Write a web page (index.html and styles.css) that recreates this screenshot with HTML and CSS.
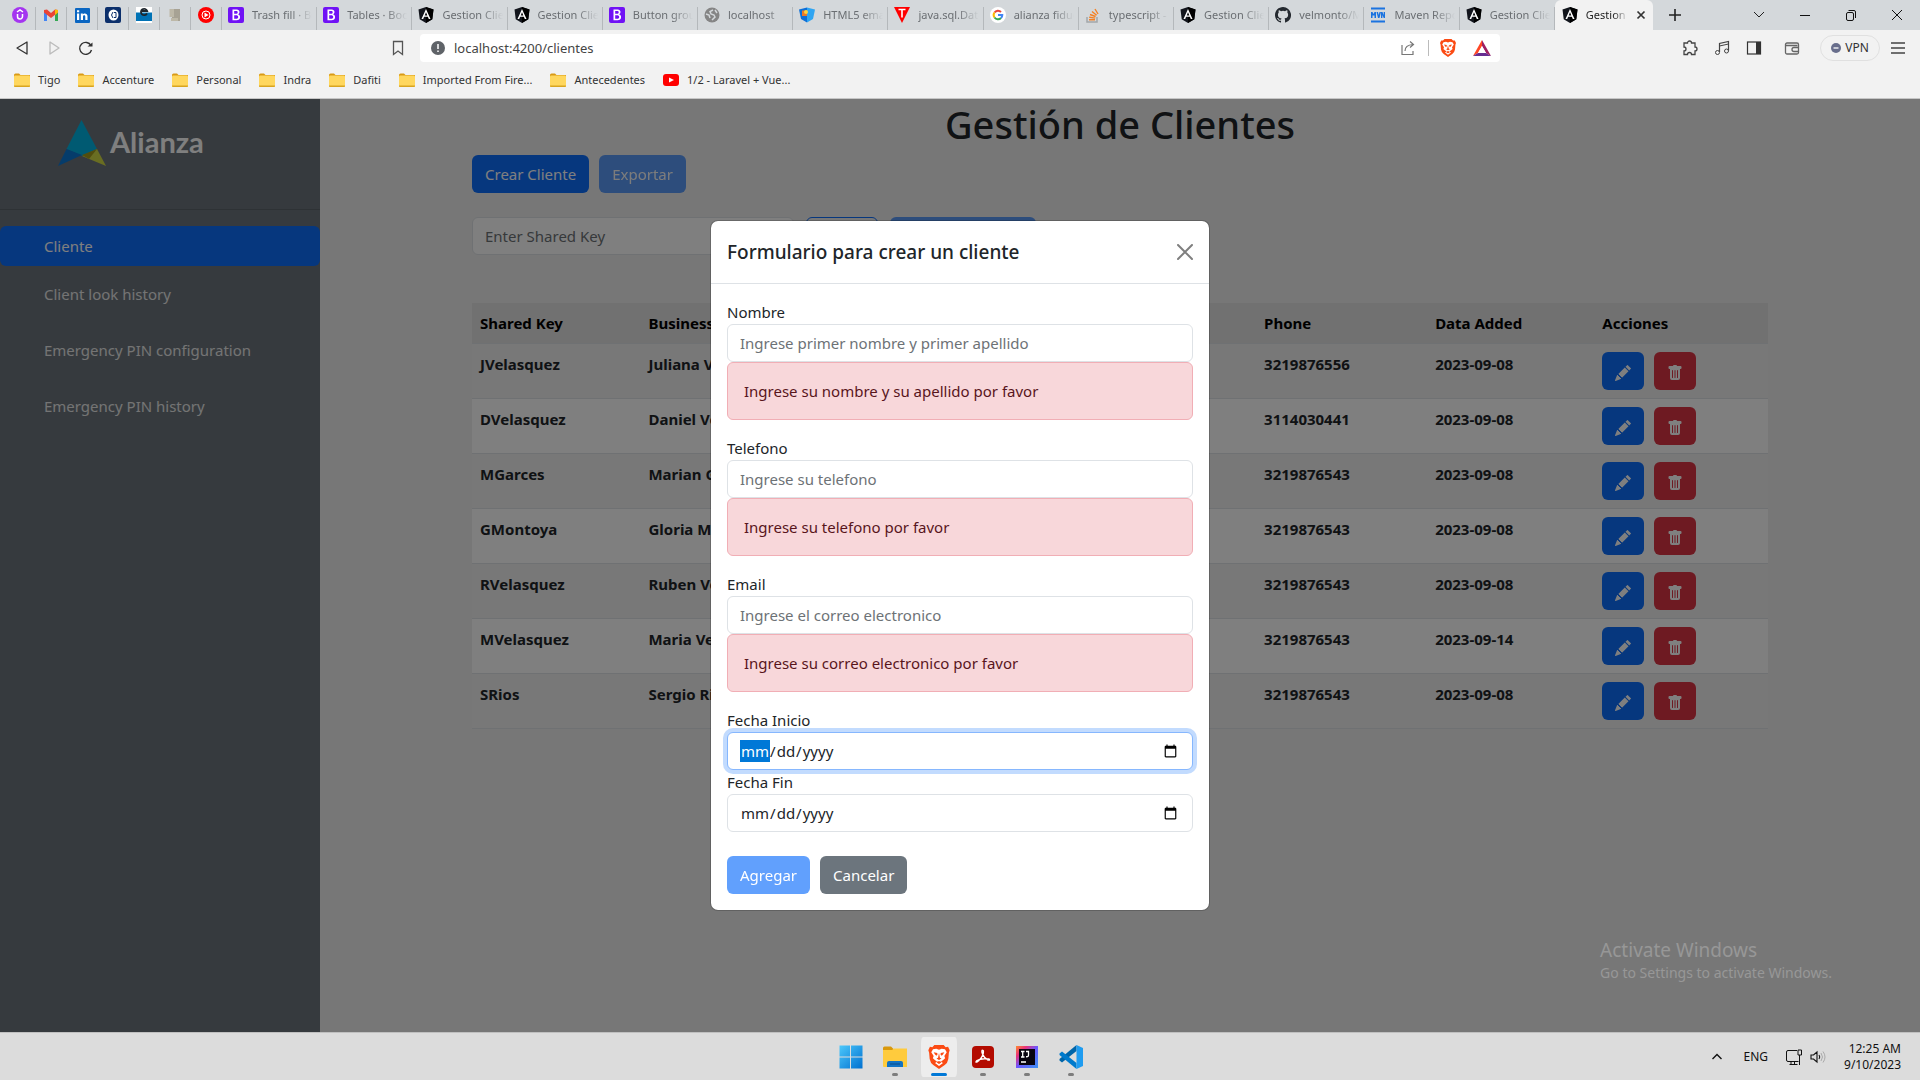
FILE: index.html
```html
<!DOCTYPE html>
<html lang="en-US">
<head>
<meta charset="utf-8">
<meta name="viewport" content="width=device-width, initial-scale=1">
<title>Gestion Clientes</title>
<link rel="stylesheet" href="styles.css">
</head>
<body>
<svg class="sprite" aria-hidden="true">
  <symbol id="i-bootstrap" viewBox="0 0 16 16"><rect width="16" height="16" rx="2" fill="#7012f5"/><path d="M4.500 2.500h4.200c1.700 0 2.800.9 2.800 2.500 0 1.100-.7 2-1.700 2.300 1.400.2 2.300 1.300 2.300 2.700 0 2.100-1.400 3.300-3.600 3.300H4.500zM6.200 4v2.800h1.700c1.100 0 1.800-.5 1.800-1.500 0-.9-.6-1.300-1.600-1.300zm0 4.200v3.600h2c1.300 0 2-.6 2-1.800 0-1.200-.8-1.800-2.200-1.800z" fill="#fff"/></symbol>
  <symbol id="i-angular" viewBox="0 0 16 16"><path d="M8 0l7.500 2.600-1.200 9.600L8 16l-6.300-3.800L.5 2.600z" fill="#12151c"/><path d="M8 0l7.500 2.600-1.200 9.600L8 16z" fill="#000"/><path d="M8 2L3.500 12h1.700l.9-2.200h3.800l.9 2.200h1.700zm0 3.200l1.300 3.200H6.700z" fill="#fff"/></symbol>
  <symbol id="i-folder" viewBox="0 0 16 16"><path d="M0 3Q0 1.500 1.500 1.500H5L6.500 3H16v4H0z" fill="#d99a16"/><rect y="3.500" width="16" height="11.500" rx="1" fill="#ffd75e"/><path d="M0 13.500h16v.5q0 1-1 1H1q-1 0-1-1z" fill="#d9a520"/></symbol>
  <symbol id="i-brave" viewBox="0 0 16 18"><path d="M11.500 0l1.500 1.600 1.800-.2L16 4l-.6 1.800-.4 4.700q-.5 3-2.700 4.500L8 18l-4.300-3Q1.500 13.500 1 10.500L.6 5.800 0 4l1.200-2.600 1.800.2L4.500 0z" fill="#fb4b14"/><path d="M8 3.500l2-.7 2.500.4 1.300 2.200-1.800 2.800.6 1.800-1.500 1.300L9.400 12.500 11 13.500 8 15.800 5 13.500l1.600-1L4.900 11.300 3.400 10l.6-1.800-1.800-2.800 1.300-2.200L6 2.800z" fill="#fff"/><path d="M4 5.500l2.700.5.200 1.200-.9.800-1-.8zm8 0L9.300 6l-.2 1.200.9.800 1-.8zM8 6l.7 3.500 1.200.7L8 11.300l-1.900-1.100 1.200-.7zM7 12.200h2l.7 1L8 14.200l-1.700-1z" fill="#fb4b14"/></symbol>
  <symbol id="i-pencil" viewBox="0 0 16 16"><path fill="currentColor" d="M12.854.146a.5.5 0 0 0-.707 0L10.500 1.793 14.207 5.500l1.647-1.646a.5.5 0 0 0 0-.708zm.646 6.061L9.793 2.500 3.293 9H3.500a.5.5 0 0 1 .5.5v.5h.5a.5.5 0 0 1 .5.5v.5h.5a.5.5 0 0 1 .5.5v.5h.5a.5.5 0 0 1 .5.500v.207zm-7.468 7.468A.5.5 0 0 1 6 13.500V13h-.5a.5.5 0 0 1-.5-.5V12h-.5a.5.5 0 0 1-.5-.5V11h-.5a.5.5 0 0 1-.5-.5V10h-.5a.499.499 0 0 1-.175-.032l-.179.178a.5.5 0 0 0-.110.168l-2 5a.5.5 0 0 0 .650.650l5-2a.5.5 0 0 0 .168-.110z"/></symbol>
  <symbol id="i-trash" viewBox="0 0 16 16"><path fill="currentColor" d="M2.500 1a1 1 0 0 0-1 1v1a1 1 0 0 0 1 1H3v9a2 2 0 0 0 2 2h6a2 2 0 0 0 2-2V4h.5a1 1 0 0 0 1-1V2a1 1 0 0 0-1-1H10a1 1 0 0 0-1-1H7a1 1 0 0 0-1 1zm3 4a.5.5 0 0 1 .5.5v7a.5.5 0 0 1-1 0v-7a.5.5 0 0 1 .5-.5M8 5a.5.5 0 0 1 .5.5v7a.5.5 0 0 1-1 0v-7A.5.5 0 0 1 8 5m3 .5v7a.5.5 0 0 1-1 0v-7a.5.5 0 0 1 1 0"/></symbol>
</svg>

<header class="chrome">
  <div class="tabstrip">
    <nav class="tabs" aria-label="Tabs">
      <a class="tab tab--pinned" href="#" aria-label="Pinned"><svg class="ico" viewBox="0 0 16 16"><circle cx="8" cy="8" r="8" fill="#a435f0"/><path d="M5.500 7v2.500a2.500 2.500 0 0 0 5 0V7M5 5l3-2 3 2" fill="none" stroke="#fff" stroke-width="1.500"/></svg></a>
      <a class="tab tab--pinned" href="#" aria-label="Gmail"><svg class="ico" viewBox="0 0 16 16"><path d="M1 4v10h3V7z" fill="#4285f4"/><path d="M15 4v10h-3V7z" fill="#34a853"/><path d="M1 3l3-.5 4 3.500 4-3.500 3 .5v2.500L8 11 1 5.500z" fill="#ea4335"/><path d="M12 2.500l3 .5v2.500L12 8z" fill="#fbbc04"/></svg></a>
      <a class="tab tab--pinned" href="#" aria-label="LinkedIn"><svg class="ico" viewBox="0 0 16 16"><rect x="1" y="1" width="15" height="15" rx="1" fill="#0a66c2"/><path d="M3 6.500h2.200V13H3zM3 3.200h2.200v2H3zM6.800 6.500h2v.9c1-1.600 4.700-1.500 4.700 1.700V13h-2.200V9.700c0-2-2.300-1.800-2.300 0V13H6.800z" fill="#fff"/></svg></a>
      <a class="tab tab--pinned" href="#" aria-label="Bank"><svg class="ico" viewBox="0 0 16 16"><rect width="16" height="16" rx="2" fill="#0b2f6b"/><ellipse cx="8.500" cy="8" rx="5" ry="5.500" fill="#fff"/><path d="M8 5Q5 8 8 11M9 5.500h2v5H9" fill="none" stroke="#0b2f6b"/></svg></a>
      <a class="tab tab--pinned" href="#" aria-label="Shop"><svg class="ico" viewBox="0 0 16 16"><path d="M0 0h16v16H0z" fill="#fff"/><path d="M0 5.500h16V14H0z" fill="#0072b5"/><path d="M11 6.500a3.200 3.200 0 1 1 .2-2.500H6" fill="none" stroke="#1d252c" stroke-width="1.800"/></svg></a>
      <a class="tab tab--pinned" href="#" aria-label="Docs"><svg class="ico" viewBox="0 0 16 16"><path d="M5 2h8v12H5z" fill="#a7a294"/><path d="M2.500 2H7v8H2.500zM4 11h7v3H4z" fill="#bdb8a8"/></svg></a>
      <a class="tab tab--pinned" href="#" aria-label="Music"><svg class="ico" viewBox="0 0 16 16"><circle cx="8" cy="8" r="8" fill="#f00"/><circle cx="8" cy="8" r="4" fill="none" stroke="#fff"/><path d="M6.500 5.500L10.500 8l-4 2.500z" fill="#fff"/></svg></a>
      <a class="tab" href="#"><svg class="ico"><use href="#i-bootstrap"/></svg><span class="tab__title">Trash fill · Bootstrap</span></a>
      <a class="tab" href="#"><svg class="ico"><use href="#i-bootstrap"/></svg><span class="tab__title">Tables · Bootstrap</span></a>
      <a class="tab" href="#"><svg class="ico"><use href="#i-angular"/></svg><span class="tab__title">Gestion Clientes</span></a>
      <a class="tab" href="#"><svg class="ico"><use href="#i-angular"/></svg><span class="tab__title">Gestion Clientes</span></a>
      <a class="tab" href="#"><svg class="ico"><use href="#i-bootstrap"/></svg><span class="tab__title">Button group</span></a>
      <a class="tab" href="#"><svg class="ico" viewBox="0 0 16 16"><circle cx="8" cy="8" r="7.500" fill="#858585"/><path d="M9 3L6 4.500 7 7l3 1 1 2-3 3M2 7l3 1 1 3M11 3l2 3" fill="none" stroke="#d4d8db" stroke-width="1.500"/></svg><span class="tab__title">localhost</span></a>
      <a class="tab" href="#"><svg class="ico" viewBox="0 0 16 16"><path d="M0 2.500L8 .500v15L2 12z" fill="#0d6fd8"/><path d="M8 .500l8 2L14 12l-6 3.500z" fill="#2fa5f2"/><path d="M3 3.500h5V9H3z" fill="#e9792b"/><circle cx="7" cy="5" r="2" fill="#ffd43b"/></svg><span class="tab__title">HTML5 email</span></a>
      <a class="tab" href="#"><svg class="ico" viewBox="0 0 16 16"><path d="M0 0h16L8 16z" fill="#f00"/><path d="M4.500 2.500h7M8 2.500v8" stroke="#fff" stroke-width="1.600"/></svg><span class="tab__title">java.sql.Date</span></a>
      <a class="tab" href="#"><svg class="ico" viewBox="0 0 16 16"><circle cx="8" cy="8" r="8" fill="#fff"/><g fill="none" stroke-width="2"><path d="M4.500 5.500A4.300 4.300 0 0 1 11 5" stroke="#ea4335"/><path d="M4.500 5.500a4.300 4.300 0 0 0 0 5" stroke="#fbbc04"/><path d="M4.500 10.500A4.300 4.300 0 0 0 11 11" stroke="#34a853"/><path d="M11 11a4 4 0 0 0 1.300-3H8" stroke="#4285f4"/></g></svg><span class="tab__title">alianza fiduciaria</span></a>
      <a class="tab" href="#"><svg class="ico" viewBox="0 0 16 16"><path d="M2 10v5h10v-5" fill="none" stroke="#a3a7aa" stroke-width="1.500"/><path d="M4 12.800h6M4.200 10.300l6 .8M5 7.500l5.600 2M7 4.500l4.600 3.800M10 2l3 5" stroke="#f48024" stroke-width="1.400"/></svg><span class="tab__title">typescript - How</span></a>
      <a class="tab" href="#"><svg class="ico"><use href="#i-angular"/></svg><span class="tab__title">Gestion Clientes</span></a>
      <a class="tab" href="#"><svg class="ico" viewBox="0 0 16 16"><path fill="#24292f" d="M8 0C3.580 0 0 3.580 0 8c0 3.540 2.290 6.530 5.470 7.590.4.070.55-.17.55-.38v-1.490c-2.010.37-2.530-.49-2.690-.94-.09-.23-.48-.94-.82-1.130-.28-.15-.68-.52-.01-.53.63-.01 1.080.58 1.230.82.72 1.210 1.870.87 2.330.66.07-.52.28-.87.51-1.070-1.780-.2-3.640-.89-3.640-3.950 0-.87.31-1.590.82-2.150-.08-.2-.36-1.020.08-2.120 0 0 .67-.21 2.200.82a7.600 7.600 0 0 1 4 0c1.530-1.040 2.200-.82 2.200-.82.44 1.100.16 1.920.08 2.120.51.56.82 1.270.82 2.150 0 3.070-1.870 3.750-3.650 3.950.29.25.54.73.54 1.480v2.200c0 .21.15.46.55.38A8 8 0 0 0 8 0"/></svg><span class="tab__title">velmonto/Mon</span></a>
      <a class="tab" href="#"><svg class="ico" viewBox="0 0 16 16"><path d="M1 .500h14v2H1zM1 13.500h14v2H1zM1 5h1.500L3.500 7l1-2H6v6H4.500V8.500h-2V11H1zM6.500 5H8l.7 3L9.500 5H11l-1.500 6H8zM11 5h1.500L13.700 8V5H15v6h-1.300l-1.300-3v3H11z" fill="#1a73e0"/></svg><span class="tab__title">Maven Repository</span></a>
      <a class="tab" href="#"><svg class="ico"><use href="#i-angular"/></svg><span class="tab__title">Gestion Clientes</span></a>
      <a class="tab tab--active" href="#" aria-current="page"><svg class="ico"><use href="#i-angular"/></svg><span class="tab__title">Gestion Clientes</span><svg class="ico-s" viewBox="0 0 10 10"><path d="M1.500 1.500l7 7m0-7l-7 7" stroke="#333" stroke-width="1.700"/></svg></a>
    </nav>
    <div class="window-controls">
      <button class="wc wc--new" aria-label="New tab"><svg class="ico" viewBox="0 0 16 16"><path d="M8 2v12M2 8h12" stroke="#222" stroke-width="1.600"/></svg></button>
      <button class="wc" aria-label="Search tabs"><svg class="ico" viewBox="0 0 16 16"><path d="M3 5l5 5 5-5" fill="none" stroke="#222"/></svg></button>
      <button class="wc" aria-label="Minimize"><svg class="ico" viewBox="0 0 16 16"><path d="M3 8.500h10" stroke="#111"/></svg></button>
      <button class="wc" aria-label="Restore"><svg class="ico" viewBox="0 0 16 16"><rect x="3.500" y="5.500" width="7" height="8" rx="1.500" fill="none" stroke="#111"/><path d="M5.500 3.500H11q1.500 0 1.500 1.500v6" fill="none" stroke="#111"/></svg></button>
      <button class="wc" aria-label="Close"><svg class="ico" viewBox="0 0 16 16"><path d="M3 3l10 10M13 3L3 13" stroke="#111"/></svg></button>
    </div>
  </div>

  <div class="toolbar">
    <div class="toolbar__nav">
      <button class="tool" aria-label="Back"><svg class="ico" viewBox="0 0 16 16"><path d="M13 2v12L3 8z" fill="none" stroke="#333" stroke-width="1.300" stroke-linejoin="round"/></svg></button>
      <button class="tool" aria-label="Forward"><svg class="ico" viewBox="0 0 16 16"><path d="M4 2v12l9-6z" fill="none" stroke="#bbb" stroke-width="1.300" stroke-linejoin="round"/></svg></button>
      <button class="tool" aria-label="Reload"><svg class="ico" viewBox="0 0 16 16"><path d="M13 5.500A6 6 0 1 0 13.500 10" fill="none" stroke="#333" stroke-width="1.400"/><path d="M9.500 6.500h5v-4z" fill="#333"/></svg></button>
    </div>
    <button class="tool tool--mark" aria-label="Bookmark"><svg class="ico" viewBox="0 0 16 16"><path d="M3.500 1.500h9v13L8 11l-4.500 3.500z" fill="none" stroke="#555" stroke-width="1.300"/></svg></button>
    <div class="address">
      <svg class="ico-m" viewBox="0 0 14 14"><circle cx="7" cy="7" r="7" fill="#5f6368"/><path d="M7 3v5M7 9.500v1.500" stroke="#fff" stroke-width="1.500"/></svg>
      <input class="address__input" aria-label="Address" value="localhost:4200/clientes">
      <svg class="ico" viewBox="0 0 16 16"><path d="M2 5v9.500h11V11M5 11q0-6 8-6.500M10 1.500l3.500 3L10 7.500" fill="none" stroke="#777" stroke-width="1.200"/></svg>
      <span class="address__sep"></span>
      <svg class="ico-l" viewBox="0 0 16 18"><use href="#i-brave"/></svg>
      <svg class="ico-l" viewBox="0 0 18 16"><path d="M9 0L0 16l5-3 4-7z" fill="#ff4724"/><path d="M0 16h18l-5-3H5z" fill="#662d91"/><path d="M9 0l9 16-5-3-4-7z" fill="#9e1f63"/><path d="M9 6l4 7H5z" fill="#fff"/></svg>
    </div>
    <div class="toolbar__ext">
      <button class="tool" aria-label="Extensions"><svg class="ico" viewBox="0 0 16 16"><path d="M2 3h3.500a2 2 0 0 1 4 0H13v4a2 2 0 0 1 0 4v3.500H9.500a2 2 0 0 0-4 0H2V11a2 2 0 0 0 0-4z" fill="none" stroke="#444" stroke-width="1.300"/></svg></button>
      <button class="tool" aria-label="Playlist"><svg class="ico" viewBox="0 0 16 16"><path d="M5.500 12V3.500l9-2v9" fill="none" stroke="#444" stroke-width="1.200"/><path d="M5.500 6l9-2" stroke="#444"/><circle cx="3.500" cy="12.500" r="2" fill="none" stroke="#444"/><circle cx="12.500" cy="11" r="2" fill="none" stroke="#444"/></svg></button>
      <button class="tool" aria-label="Side panel"><svg class="ico" viewBox="0 0 16 16"><rect x="1.500" y="2" width="13" height="12" fill="none" stroke="#333" stroke-width="1.200"/><path d="M10 2h4.500v12H10z" fill="#333"/></svg></button>
      <button class="tool" aria-label="Wallet"><svg class="ico" viewBox="0 0 16 16"><rect x="1.500" y="3" width="13" height="11" rx="1.500" fill="none" stroke="#666" stroke-width="1.300"/><path d="M1.500 5.500h12M14.500 7.500H10a2 2 0 0 0 0 4h4.500" fill="none" stroke="#666" stroke-width="1.300"/></svg></button>
      <button class="vpn"><svg class="ico-s" viewBox="0 0 10 10"><circle cx="5" cy="5" r="5" fill="#686e8c"/><path d="M2.500 5h5" stroke="#fff" stroke-width="1.300"/></svg>VPN</button>
      <button class="tool" aria-label="Menu"><svg class="ico" viewBox="0 0 16 16"><path d="M1 3h14M1 8h14M1 13h14" stroke="#444" stroke-width="1.300"/></svg></button>
    </div>
  </div>

  <nav class="bookmarks" aria-label="Bookmarks">
    <a class="bookmark" href="#"><svg class="ico"><use href="#i-folder"/></svg>Tigo</a>
    <a class="bookmark" href="#"><svg class="ico"><use href="#i-folder"/></svg>Accenture</a>
    <a class="bookmark" href="#"><svg class="ico"><use href="#i-folder"/></svg>Personal</a>
    <a class="bookmark" href="#"><svg class="ico"><use href="#i-folder"/></svg>Indra</a>
    <a class="bookmark" href="#"><svg class="ico"><use href="#i-folder"/></svg>Dafiti</a>
    <a class="bookmark" href="#"><svg class="ico"><use href="#i-folder"/></svg>Imported From Fire...</a>
    <a class="bookmark" href="#"><svg class="ico"><use href="#i-folder"/></svg>Antecedentes</a>
    <a class="bookmark" href="#"><svg class="ico" viewBox="0 0 16 16"><rect y="2" width="16" height="12" rx="3" fill="#f00"/><path d="M6 5.500L11 8l-5 2.500z" fill="#fff"/></svg>1/2 - Laravel + Vue...</a>
  </nav>
</header>

<div class="page">
  <aside class="sidebar">
    <div class="brand">
      <svg class="brand__mark" viewBox="0 0 48 46"><path d="M23.500 0L39 29 24 36 8.500 29z" fill="#00b4e4"/><path d="M8.500 29L0 46l24-11z" fill="#0a78d6"/><path d="M39 29l9 17-24-10z" fill="#d3da45"/><path d="M39 29l-8 10-7-4z" fill="#a39a1c"/></svg>
      <span class="brand__name">Alianza</span>
    </div>
    <nav class="menu" aria-label="Menu">
      <a class="menu__item menu__item--active" href="#">Cliente</a>
      <a class="menu__item" href="#">Client look history</a>
      <a class="menu__item" href="#">Emergency PIN configuration</a>
      <a class="menu__item" href="#">Emergency PIN history</a>
    </nav>
  </aside>

  <main class="content">
    <h1 class="title">Gestión de Clientes</h1>
    <div class="container">
      <div class="actions">
        <button class="btn btn--primary">Crear Cliente</button>
        <button class="btn btn--primary" disabled>Exportar</button>
      </div>
      <form class="search">
        <input class="control search__input" aria-label="Shared Key" placeholder="Enter Shared Key">
        <button class="btn btn--outline" type="button">Buscar</button>
        <button class="btn btn--primary" type="button" disabled>Limpiar búsqueda</button>
      </form>
      <table class="clients">
        <colgroup><col class="c-key"><col class="c-name"><col class="c-mail"><col class="c-phone"><col class="c-date"><col class="c-act"></colgroup>
        <thead><tr><th>Shared Key</th><th>Business ID</th><th>Email</th><th>Phone</th><th>Data Added</th><th>Acciones</th></tr></thead>
        <tbody>
          <tr><th>JVelasquez</th><th>Juliana Velasquez</th><td></td><th>3219876556</th><th>2023-09-08</th><td><div class="row-actions"><button class="btn btn--primary" aria-label="Editar"><svg class="ico"><use href="#i-pencil"/></svg></button><button class="btn btn--danger" aria-label="Borrar"><svg class="ico"><use href="#i-trash"/></svg></button></div></td></tr>
          <tr><th>DVelasquez</th><th>Daniel Velasquez</th><td></td><th>3114030441</th><th>2023-09-08</th><td><div class="row-actions"><button class="btn btn--primary" aria-label="Editar"><svg class="ico"><use href="#i-pencil"/></svg></button><button class="btn btn--danger" aria-label="Borrar"><svg class="ico"><use href="#i-trash"/></svg></button></div></td></tr>
          <tr><th>MGarces</th><th>Marian Garces</th><td></td><th>3219876543</th><th>2023-09-08</th><td><div class="row-actions"><button class="btn btn--primary" aria-label="Editar"><svg class="ico"><use href="#i-pencil"/></svg></button><button class="btn btn--danger" aria-label="Borrar"><svg class="ico"><use href="#i-trash"/></svg></button></div></td></tr>
          <tr><th>GMontoya</th><th>Gloria Montoya</th><td></td><th>3219876543</th><th>2023-09-08</th><td><div class="row-actions"><button class="btn btn--primary" aria-label="Editar"><svg class="ico"><use href="#i-pencil"/></svg></button><button class="btn btn--danger" aria-label="Borrar"><svg class="ico"><use href="#i-trash"/></svg></button></div></td></tr>
          <tr><th>RVelasquez</th><th>Ruben Velasquez</th><td></td><th>3219876543</th><th>2023-09-08</th><td><div class="row-actions"><button class="btn btn--primary" aria-label="Editar"><svg class="ico"><use href="#i-pencil"/></svg></button><button class="btn btn--danger" aria-label="Borrar"><svg class="ico"><use href="#i-trash"/></svg></button></div></td></tr>
          <tr><th>MVelasquez</th><th>Maria Velasquez</th><td></td><th>3219876543</th><th>2023-09-14</th><td><div class="row-actions"><button class="btn btn--primary" aria-label="Editar"><svg class="ico"><use href="#i-pencil"/></svg></button><button class="btn btn--danger" aria-label="Borrar"><svg class="ico"><use href="#i-trash"/></svg></button></div></td></tr>
          <tr><th>SRios</th><th>Sergio Rios</th><td></td><th>3219876543</th><th>2023-09-08</th><td><div class="row-actions"><button class="btn btn--primary" aria-label="Editar"><svg class="ico"><use href="#i-pencil"/></svg></button><button class="btn btn--danger" aria-label="Borrar"><svg class="ico"><use href="#i-trash"/></svg></button></div></td></tr>
        </tbody>
      </table>
    </div>
  </main>

  <div class="backdrop">
    <div class="modal" role="dialog" aria-modal="true" aria-labelledby="modal-title">
      <div class="modal__header">
        <h2 class="modal__title" id="modal-title">Formulario para crear un cliente</h2>
        <button class="modal__close" aria-label="Close"><svg class="ico" viewBox="0 0 16 16"><path d="M1 1l14 14M15 1L1 15" stroke="currentColor" stroke-width="2" stroke-linecap="round"/></svg></button>
      </div>
      <form class="modal__body">
        <div class="field"><label for="nombre">Nombre</label><input class="control" id="nombre" type="text" placeholder="Ingrese primer nombre y primer apellido"><div class="alert" role="alert">Ingrese su nombre y su apellido por favor</div></div>
        <div class="field"><label for="telefono">Telefono</label><input class="control" id="telefono" type="text" placeholder="Ingrese su telefono"><div class="alert" role="alert">Ingrese su telefono por favor</div></div>
        <div class="field"><label for="email">Email</label><input class="control" id="email" type="text" placeholder="Ingrese el correo electronico"><div class="alert" role="alert">Ingrese su correo electronico por favor</div></div>
        <div class="field field--date"><label for="inicio">Fecha Inicio</label><input class="control control--focus" id="inicio" type="date"></div>
        <div class="field field--date"><label for="fin">Fecha Fin</label><input class="control" id="fin" type="date"></div>
        <div class="modal__actions">
          <button class="btn btn--primary" type="submit" disabled>Agregar</button>
          <button class="btn btn--secondary" type="button">Cancelar</button>
        </div>
      </form>
    </div>
  </div>

  <div class="watermark">
    <p class="watermark__title">Activate Windows</p>
    <p class="watermark__text">Go to Settings to activate Windows.</p>
  </div>
</div>

<footer class="taskbar">
  <div class="taskbar__apps">
    <button class="app" aria-label="Start"><svg class="app__icon" viewBox="0 0 24 24"><defs><linearGradient id="win" x2="1" y2="1"><stop stop-color="#4cc8fb"/><stop offset="1" stop-color="#0070d0"/></linearGradient></defs><path d="M.500.500H11v11H.500zM12 .500h11.500v11H12zM.500 12.500H11v11H.500zM12 12.500h11.500v11H12z" fill="url(#win)"/></svg></button>
    <button class="app app--open" aria-label="File Explorer"><svg class="app__icon" viewBox="0 0 24 24"><path d="M0 3q0-1.500 1.500-1.500H8L10.500 4v4H0z" fill="#d9980c"/><path d="M0 5h9l2-1.500h13V22H1q-1 0-1-1z" fill="#ffcb3d"/><path d="M4 22v-4q0-2 2-2h12q2 0 2 2v4z" fill="#1173c4"/><path d="M7 19h10" stroke="#0c579b" stroke-width="1.500"/></svg></button>
    <button class="app app--open app--current" aria-label="Brave"><svg class="app__icon"><use href="#i-brave"/></svg></button>
    <button class="app app--open" aria-label="Acrobat"><svg class="app__icon" viewBox="0 0 24 24"><rect x="1" y="1" width="22" height="22" rx="4" fill="#b30b00"/><path d="M11 5.500q2-1 1.200 3Q11 13.500 6 17q-2 .5 0-1.500 4-2.500 12-1.500 1.500 1.500-1 1-4-2-5.500-6-1-2.500-.5-3.500z" fill="none" stroke="#fff" stroke-width="1.400"/></svg></button>
    <button class="app app--open" aria-label="IntelliJ IDEA"><svg class="app__icon" viewBox="0 0 24 24"><defs><linearGradient id="ij" x2="1" y2="1"><stop stop-color="#fe8c2d"/><stop offset=".25" stop-color="#e8317b"/><stop offset=".5" stop-color="#6b57ff"/><stop offset="1" stop-color="#3d93f5"/></linearGradient></defs><path d="M1 1h22v22H1z" fill="url(#ij)"/><path d="M4 4h16v16H4z" fill="#080410"/><path d="M6 6.500h3.500M7.700 6.500V12M6 12h3.500M11 6.500h2.500V10q0 2-2.500 1.700M6 17h5" fill="none" stroke="#fff" stroke-width="1.300"/></svg></button>
    <button class="app app--open" aria-label="Visual Studio Code"><svg class="app__icon" viewBox="0 0 24 24"><path d="M17.500 0v6L3 17.500.500 15.500v-1.500z" fill="#0065a9"/><path d="M17.500 24v-6L3 6.500.500 8.500V10z" fill="#007acc"/><path d="M17.500 0L24 3v18l-6.500 3z" fill="#1f9cf0"/></svg></button>
  </div>
  <div class="tray">
    <button class="tray__btn" aria-label="Hidden icons"><svg class="ico" viewBox="0 0 16 16"><path d="M3.500 10L8 5.500l4.500 4.500" fill="none" stroke="#111" stroke-width="1.400"/></svg></button>
    <button class="tray__btn">ENG</button>
    <button class="tray__btn tray__btn--status" aria-label="Network and volume"><svg class="ico" viewBox="0 0 16 16"><path d="M11 1.500H2Q.500 1.500.500 3v8Q.500 12.500 2 12.500h10.500M5 12.500v3M3.500 15.500h8M8.500 12.500v3M12 1h3.500v5H12zM13.500 6v10" fill="none" stroke="#111"/></svg><svg class="ico" viewBox="0 0 16 16"><path d="M1 6v4h2.500L7 13V3L3.500 6zM9 6q1.500 2 0 4" fill="none" stroke="#111" stroke-width="1.100"/><path d="M11 4q3 4 0 8M13 2.500q4 5.500 0 11" fill="none" stroke="#aaa"/></svg></button>
    <div class="clock"><time>12:25 AM</time><time>9/10/2023</time></div>
  </div>
</footer>
</body>
</html>
```
FILE: styles.css
```css
*, *::before, *::after { box-sizing: border-box; }

body {
  margin: 0;
  min-height: 100vh;
  display: flex;
  flex-direction: column;
  font-family: "Noto Sans", "Open Sans", sans-serif;
  font-size: 15px;
  line-height: 24px;
  color: #212529;
}

button, input { font: inherit; color: inherit; }
button { border: 0; padding: 0; background: none; }
a { color: inherit; text-decoration: none; }
svg { display: block; flex: none; }

.sprite { position: absolute; width: 0; height: 0; }
.ico { width: 16px; height: 16px; }
.ico-s { width: 10px; height: 10px; }
.ico-m { width: 14px; height: 14px; }
.ico-l { width: 18px; height: 18px; }

/* Browser window */
.chrome {
  background: #f2f2f2;
  border-bottom: 1px solid #c6c6c6;
  font-size: 11px;
  line-height: 16px;
}

.tabstrip { display: flex; height: 30px; background: #d4d8db; }
.tabs { display: flex; flex: 1; min-width: 0; padding-left: 5px; }
.tab {
  display: flex;
  flex: 1 1 0;
  min-width: 0;
  align-items: center;
  gap: 8px;
  padding: 0 5px 0 6px;
  color: #6a6e72;
  background: linear-gradient(#b4b8bb, #b4b8bb) right bottom / 1px 23px no-repeat;
}
.tab--pinned { flex: 0 0 31px; padding: 0 8px 0 7px; }
.tab--active { background: #f2f2f2; border-radius: 6px 6px 0 0; color: #222; padding: 0 7px; }
.tab__title {
  flex: 1;
  overflow: hidden;
  white-space: nowrap;
  -webkit-mask-image: linear-gradient(90deg, #000 65%, transparent);
  mask-image: linear-gradient(90deg, #000 65%, transparent);
}
.window-controls { display: flex; width: 267px; align-items: center; }
.wc { display: flex; width: 46px; height: 28px; align-items: center; justify-content: center; }
.wc--new { width: 44px; margin-right: auto; }

.toolbar { display: flex; align-items: center; height: 36px; }
.toolbar__nav { display: flex; gap: 16px; width: 390px; padding-left: 14px; }
.tool { display: flex; width: 16px; height: 16px; }
.tool--mark { margin-right: 14px; }
.address {
  display: flex;
  flex: 1;
  align-items: center;
  gap: 12px;
  height: 28px;
  padding: 0 9px 0 11px;
  border-radius: 4px;
  background: #fff;
}
.address__input { flex: 1; min-width: 0; margin-left: -3px; padding: 0; border: 0; outline: 0; font-size: 13px; background: none; color: #444; }
.address__sep { width: 1px; height: 16px; background: #bbb; }
.address .ico-l { margin-left: -2px; }
.address .ico-l + .ico-l { margin-left: 4px; }
.toolbar__ext { display: flex; align-items: center; justify-content: flex-end; gap: 16px; width: 420px; padding-right: 14px; }
.toolbar__ext .vpn { margin-left: 4px; margin-right: -6px; }
.toolbar__ext .tool:nth-child(4) { margin-left: 6px; }
.vpn {
  display: flex;
  align-items: center;
  justify-content: center;
  gap: 4px;
  width: 60px;
  height: 26px;
  border: 1px solid #e0e0e0;
  border-radius: 13px;
  font-size: 12px;
  color: #333;
}

.bookmarks { display: flex; gap: 18px; padding: 6px 14px 10px; color: #333; }
.bookmark { display: flex; gap: 8px; white-space: nowrap; }

/* Application */
.page { position: relative; display: flex; flex: 1; }

.sidebar { width: 320px; background: #6c757d; color: #e8e8e8; }
.brand { display: flex; gap: 4px; height: 111px; padding: 21px 58px; border-bottom: 1px solid #5c646b; }
.brand__mark { width: 48px; height: 46px; }
.brand__name { padding-top: 6px; font-family: Lato, sans-serif; font-size: 29px; font-weight: 700; line-height: 32px; color: #fff; }
.menu { display: flex; flex-direction: column; gap: 16px; padding-top: 16px; }
.menu__item { height: 40px; padding: 8px 44px; border-radius: 6px; }
.menu__item--active { margin-bottom: -8px; background: #0d6efd; color: #fff; }

.content { flex: 1; min-width: 0; background: #efefef; }
.title { margin: 0 0 6px; font-size: 38px; font-weight: 500; line-height: 50px; text-align: center; }
.container { max-width: 1320px; margin: 0 auto; padding: 0 12px; }
.actions { display: flex; gap: 10px; margin-bottom: 24px; }
.search { display: flex; gap: 12px; margin-bottom: 48px; }
.search__input { width: 322px; }
.search .btn--outline { width: 72px; }
.search .btn--primary { width: 146px; padding: 0; }

.btn {
  height: 38px;
  padding: 0 13px;
  border-radius: 6px;
  white-space: nowrap;
  color: #fff;
}
.btn--primary { background: #0d6efd; }
.btn--secondary { background: #6c757d; }
.btn--danger { background: #dc3545; }
.btn--outline { border: 1px solid #0d6efd; color: #0d6efd; padding: 0; }
.btn:disabled { opacity: .65; }

.control {
  display: block;
  height: 38px;
  padding: 6px 12px;
  border: 1px solid #dee2e6;
  border-radius: 6px;
  background: #fff;
  outline: 0;
}
.control::placeholder { color: #6d7276; opacity: 1; }

.clients { width: 100%; table-layout: fixed; border-collapse: separate; border-spacing: 0; text-align: left; background: #fff; }
.c-key { width: 13%; }
.c-name { width: 20%; }
.c-mail { width: 27.5%; }
.c-phone { width: 13.2%; }
.c-date { width: 12.9%; }
.c-act { width: 13.4%; }
.clients th, .clients td { height: 55px; padding: 8px; border-bottom: 1px solid #dee2e6; vertical-align: top; font-weight: 700; }
.clients thead th { height: 41px; background: #e2e2e2; color: #000; }
.clients tbody tr:nth-child(odd) { background: #f1f1f1; }
.row-actions { display: flex; gap: 10px; }
.row-actions .btn { padding-top: 3px; }

/* Dialog */
.backdrop {
  position: absolute;
  inset: 0;
  display: flex;
  align-items: center;
  justify-content: center;
  background: rgba(0, 0, 0, .5);
}
.modal {
  width: 500px;
  border: 1px solid rgba(0, 0, 0, .18);
  border-radius: 8px;
  background: #fff;
  background-clip: padding-box;
}
.modal__header { display: flex; align-items: center; justify-content: space-between; padding: 16px; border-bottom: 1px solid #dee2e6; }
.modal__title { margin: 0; font-size: 19px; font-weight: 500; line-height: 30px; }
.modal__close { color: #7f7f7f; }
.modal__body { padding: 16px; }
.field { margin-bottom: 16px; }
.field--date { margin-bottom: 0; }
.field label { display: block; }
.field .control { width: 100%; }
.control--focus { border-color: #86b7fe; box-shadow: 0 0 0 4px rgba(13, 110, 253, .25); }
.control--focus::-webkit-datetime-edit-month-field { background: #0078d7; color: #fff; }
.alert { padding: 16px; border: 1px solid #f1aeb5; border-radius: 6px; background: #f8d7da; color: #58151c; }
.modal__actions { display: flex; gap: 10px; margin-top: 24px; }

.watermark { position: absolute; right: 88px; bottom: 48px; color: #979797; }
.watermark p { margin: 0; }
.watermark__title { font-size: 19px; }
.watermark__text { font-size: 14px; line-height: 22px; }

/* Taskbar */
.taskbar {
  display: grid;
  grid-template-columns: 1fr auto 1fr;
  height: 48px;
  border-top: 1px solid #c0c0c0;
  background: #dcdcdc;
}
.taskbar__apps { display: flex; grid-column: 2; align-items: center; padding-left: 2px; }
.app { position: relative; display: flex; width: 44px; height: 40px; align-items: center; justify-content: center; }
.app__icon { width: 24px; height: 24px; }
.app--open::after {
  content: "";
  position: absolute;
  left: 50%;
  bottom: 1px;
  width: 6px;
  height: 3px;
  border-radius: 2px;
  background: #7d7d7d;
  transform: translateX(-50%);
}
.app--current { background: #ededed; background-clip: content-box; border-radius: 6px; padding: 0 4px; }
.app--current::after { width: 16px; background: #0078d7; }
.tray { display: flex; align-items: center; justify-content: flex-end; padding-right: 19px; font-size: 12px; line-height: 16px; color: #111; }
.tray__btn { display: flex; margin-right: 18px; }
.tray__btn--status { gap: 8px; }
.clock { display: flex; flex-direction: column; min-width: 54px; text-align: right; }
```
